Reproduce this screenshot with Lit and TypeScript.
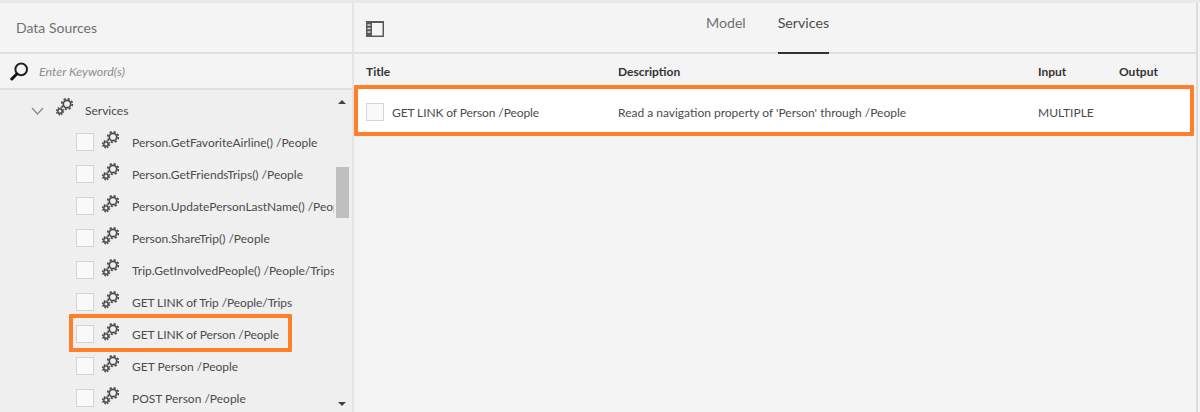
import { LitElement, css, html, svg } from 'lit'
import { customElement } from 'lit/decorators.js'

const services = [
  'Person.GetFavoriteAirline() /People',
  'Person.GetFriendsTrips() /People',
  'Person.UpdatePersonLastName() /People',
  'Person.ShareTrip() /People',
  'Trip.GetInvolvedPeople() /People/Trips',
  'GET LINK of Trip /People/Trips',
  'GET LINK of Person /People',
  'GET Person /People',
  'POST Person /People',
]

const gears = html`<svg class="gears" width="20" height="20" viewBox="0 0 20 20">
  ${svg`<g fill="none" stroke="#4b4b4b">
    <circle cx="12" cy="7" r="3.7" stroke-width="1.7"/>
    <circle cx="12" cy="7" r="5.3" stroke-width="1.7" stroke-dasharray="2.2 1.96"/>
    <circle cx="5" cy="14.2" r="2.2" stroke-width="1.6"/>
    <circle cx="5" cy="14.2" r="3.5" stroke-width="1.4" stroke-dasharray="1.5 1.25"/>
  </g>`}
</svg>`

@customElement('app-root')
export class AppRoot extends LitElement {
  static styles = css`
    :host {
      display: flex;
      height: 412px;
      overflow: hidden;
      box-sizing: border-box;
      border-top: 3px solid #e9e9e9;
      background: #f4f4f4;
      font-family: Lato, 'Open Sans', sans-serif;
      font-size: 12px;
      color: #4b4b4b;
    }
    .left {
      width: 352px;
      flex: none;
      display: flex;
      flex-direction: column;
      border-right: 2px solid #e4e4e4;
    }
    .left-head {
      height: 51px;
      flex: none;
      box-sizing: border-box;
      border-bottom: 2px solid #e1e1e1;
      padding: 16px 0 0 16px;
      font-size: 14px;
      color: #707070;
    }
    .search {
      height: 36px;
      flex: none;
      box-sizing: border-box;
      display: flex;
      align-items: center;
      gap: 10px;
      padding-left: 10px;
      border-bottom: 2px solid #dedede;
      font-size: 12.4px;
      font-style: italic;
      color: #8e8e8e;
    }
    .tree {
      flex: 1;
      min-height: 0;
      display: flex;
      background: #efefef;
      overflow: hidden;
    }
    .tree-body {
      width: 334px;
      flex: none;
      overflow: hidden;
    }
    .group {
      height: 36px;
      box-sizing: border-box;
      display: flex;
      align-items: center;
      padding: 5px 0 0 31px;
    }
    .chevron { margin-right: 11px; }
    .group .gears { margin-right: 10px; margin-top: -7px; }
    .item {
      height: 32px;
      display: flex;
      align-items: center;
      position: relative;
      padding-left: 76px;
      white-space: nowrap;
    }
    .item .gears { margin: -5px 11px 0 7px; flex: none; }
    .tight { letter-spacing: -0.1px; }
    .item.marked::after {
      content: '';
      position: absolute;
      left: 69px;
      top: -4px;
      width: 223px;
      height: 38px;
      box-sizing: border-box;
      border: 4px solid #ff7f2a;
      border-radius: 1px;
    }
    .box {
      width: 18px;
      height: 18px;
      flex: none;
      box-sizing: border-box;
      border: 1px solid #d4d4d4;
      background: #f9f9f9;
    }
    .scroll {
      width: 16px;
      display: flex;
      flex-direction: column;
      align-items: center;
      padding-top: 10px;
      box-sizing: border-box;
    }
    .arrow-up, .arrow-down {
      width: 0;
      height: 0;
      border-left: 4px solid transparent;
      border-right: 4px solid transparent;
    }
    .arrow-up { border-bottom: 4px solid #444; }
    .arrow-down { border-top: 4px solid #444; margin-top: 184px; }
    .thumb {
      width: 13px;
      height: 51px;
      margin-top: 63px;
      background: #bfbfbf;
    }
    .right {
      flex: 1;
      min-width: 0;
      display: flex;
      flex-direction: column;
      border-right: 2px solid #dcdcdc;
      margin-right: 2px;
      background: #f4f4f4;
    }
    .right-head {
      height: 51px;
      flex: none;
      box-sizing: border-box;
      border-bottom: 2px solid #e1e1e1;
      display: flex;
      justify-content: center;
      gap: 32px;
      position: relative;
      padding-right: 15px;
      font-size: 14.2px;
      color: #707070;
    }
    .panel-icon {
      position: absolute;
      left: 12px;
      top: 18px;
    }
    .tab {
      height: 51px;
      box-sizing: border-box;
      padding-top: 11px;
    }
    .tab.active {
      color: #4b4b4b;
      border-bottom: 2px solid #323232;
    }
    .cols, .row {
      display: grid;
      grid-template-columns: 252px 420px 81px 1fr;
      align-items: center;
    }
    .cols {
      height: 31px;
      box-sizing: border-box;
      padding: 4px 0 0 12px;
      font-weight: 700;
      color: #333;
    }
    .row {
      height: 51px;
      box-sizing: border-box;
      margin-right: 2px;
      padding: 2px 0 0 8px;
      border: 4px solid #ff7f2a;
      border-radius: 1px;
      background: #fff;
    }
    .title {
      display: flex;
      align-items: center;
      gap: 8px;
    }
    .item .label { padding-top: 1px; }
    .row .label { padding-top: 2px; }
  `

  render() {
    return html`
      <section class="left">
        <div class="left-head">Data Sources</div>
        <div class="search">
          <svg width="19" height="19" viewBox="0 0 19 19">
            <circle cx="11.2" cy="7.4" r="5.8" fill="none" stroke="#222" stroke-width="2"/>
            <path d="M6.8 12 L1.8 17" stroke="#111" stroke-width="3" stroke-linecap="round"/>
          </svg>
          <span>Enter Keyword(s)</span>
        </div>
        <div class="tree">
          <div class="tree-body">
            <div class="group">
              <svg class="chevron" width="13" height="8" viewBox="0 0 13 8">
                <path d="M1 1 L6.5 7 L12 1" fill="none" stroke="#8a8a8a" stroke-width="1.3"/>
              </svg>
              ${gears}
              <span>Services</span>
            </div>
            ${services.map(
              (name) => html`
                <div class="item ${name === 'GET LINK of Person /People' ? 'marked' : ''}">
                  <span class="box"></span>${gears}<span class="label ${name.startsWith('GET LINK') ? 'tight' : ''}">${name}</span>
                </div>
              `,
            )}
          </div>
          <div class="scroll">
            <div class="arrow-up"></div>
            <div class="thumb"></div>
            <div class="arrow-down"></div>
          </div>
        </div>
      </section>
      <section class="right">
        <div class="right-head">
          <svg class="panel-icon" width="18" height="16" viewBox="0 0 18 16">
            <rect x="0" y="0" width="18" height="16" fill="#5a5a5a"/>
            <rect x="6" y="2" width="10.5" height="12.5" fill="#f6f6f6"/>
            <path d="M1.5 4h3M1.5 7.5h3M1.5 11h3" stroke="#ddd" stroke-width="1.4"/>
          </svg>
          <div class="tab">Model</div>
          <div class="tab active">Services</div>
        </div>
        <div class="cols">
          <span>Title</span><span>Description</span><span>Input</span><span>Output</span>
        </div>
        <div class="row">
          <div class="title"><span class="box"></span><span class="label tight">GET LINK of Person /People</span></div>
          <span class="label">Read a navigation property of 'Person' through /People</span>
          <span class="label">MULTIPLE</span>
          <span></span>
        </div>
      </section>
    `
  }
}
